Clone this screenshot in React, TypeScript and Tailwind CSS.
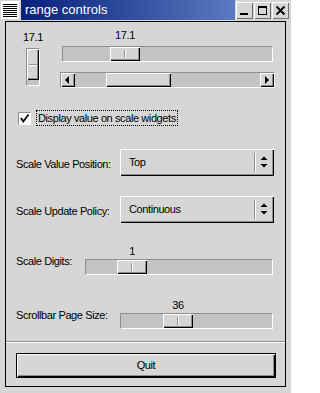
const raised =
  "bg-[#d6d6d6] shadow-[inset_1px_1px_0_#ffffff,inset_-1px_-1px_0_#000000,inset_-2px_-2px_0_#8e8e8e]";
const trough =
  "border border-t-[#8e8e8e] border-l-[#8e8e8e] border-r-white border-b-white bg-[#c3c3c3]";

function HThumb({ offset }: { offset: string }) {
  return (
    <div className={`flex h-full w-[30px] items-center justify-center ${raised} ${offset}`}>
      <div className="h-[8px] w-px bg-[#8e8e8e]" />
      <div className="h-[8px] w-px bg-white" />
    </div>
  );
}

function OptionMenu({ value }: { value: string }) {
  return (
    <div className={`flex h-[27px] w-[154px] items-center ${raised}`}>
      <span className="flex-1 pl-[9px]">{value}</span>
      <div className="flex h-[19px]">
        <div className="w-px bg-[#8e8e8e]" />
        <div className="w-px bg-white" />
      </div>
      <svg width="17" height="27" viewBox="0 0 17 27" className="mr-[1px]">
        <polygon points="4.5,11 11.5,11 8,7.5" fill="#000" />
        <polygon points="4.5,15 11.5,15 8,18.5" fill="#000" />
      </svg>
    </div>
  );
}

function TitleButton({ kind }: { kind: "min" | "max" | "close" }) {
  return (
    <div className="h-[17px] w-[17px] bg-[#d6d6d6] shadow-[inset_1px_1px_0_#ffffff,inset_-1px_-1px_0_#6e6e6e]">
      <svg width="17" height="17" viewBox="0 0 17 17">
        {kind === "min" && <rect x="4" y="11" width="8" height="2" fill="#000" />}
        {kind === "max" && (
          <>
            <rect x="4.5" y="4.5" width="8" height="8" fill="none" stroke="#000" />
            <rect x="4" y="4" width="9" height="2" fill="#000" />
          </>
        )}
        {kind === "close" && (
          <path d="M4.5 4.5 L12.5 12.5 M12.5 4.5 L4.5 12.5" stroke="#000" strokeWidth="1.8" />
        )}
      </svg>
    </div>
  );
}

export default function App() {
  return (
    <div className="flex h-[393px] w-[291px] flex-col bg-[#d6d6d6] font-['Liberation_Sans',Arial,sans-serif] text-[11px] tracking-[-0.4px] text-black">
      {/* title bar */}
      <div className="flex h-[20px]">
        <svg width="20" height="20" viewBox="0 0 20 20">
          <rect x="1" y="1" width="18" height="18" fill="#ffffff" />
          {[4, 6, 8, 10, 12, 14, 16].map((y) => (
            <rect key={y} x="3" y={y} width="14" height="1" fill="#000" />
          ))}
        </svg>
        <div className="ml-[1px] flex h-[20px] w-[214px] items-center bg-gradient-to-r from-[#0a1f78] to-[#5a7ac2] pl-[4px] text-[13px] tracking-[0px] text-white">
          range controls
        </div>
        <div className="ml-[1px] mt-[2px] flex gap-[1px]">
          <TitleButton kind="min" />
          <TitleButton kind="max" />
          <TitleButton kind="close" />
        </div>
      </div>

      {/* client area */}
      <div className="ml-[5px] mt-[1px] flex h-[366px] w-[281px] flex-col border border-black">
        {/* scales */}
        <div className="mt-[7px] flex">
          <div className="ml-[14px] flex w-[26px] flex-col items-center">
            <div className="mt-[2px] h-[13px] leading-[13px]">17.1</div>
            <div className={`mt-[4px] flex h-[38px] w-[14px] flex-col ${trough}`}>
              <div className={`flex h-[31px] w-full flex-col items-center justify-center ${raised}`}>
                <div className="h-px w-[8px] bg-[#8e8e8e]" />
                <div className="h-px w-[8px] bg-white" />
              </div>
            </div>
          </div>
          <div className="ml-[14px] flex w-[215px] flex-col">
            <div className="ml-[50px] h-[13px] w-[30px] text-center leading-[13px]">17.1</div>
            <div className={`mx-[2px] mt-[4px] flex h-[16px] ${trough}`}>
              <HThumb offset="ml-[47px]" />
            </div>
            <div className={`mt-[10px] flex h-[16px] ${trough}`}>
              <div className={`h-[14px] w-[14px] ${raised}`}>
                <svg width="14" height="14" viewBox="0 0 14 14">
                  <polygon points="4,7 8,3 8,11" fill="#000" />
                </svg>
              </div>
              <div className={`ml-[31px] h-[14px] w-[65px] ${raised}`} />
              <div className={`ml-auto h-[14px] w-[14px] ${raised}`}>
                <svg width="14" height="14" viewBox="0 0 14 14">
                  <polygon points="9,7 5,3 5,11" fill="#000" />
                </svg>
              </div>
            </div>
          </div>
        </div>

        {/* checkbox */}
        <div className="ml-[12px] mt-[22px] flex h-[16px] items-center">
          <div className="h-[13px] w-[13px] border border-t-[#8e8e8e] border-l-[#8e8e8e] border-r-white border-b-white bg-white">
            <svg width="11" height="11" viewBox="0 0 11 11">
              <path d="M2 5 L4.3 8.5 L9.5 1.5" fill="none" stroke="#000" strokeWidth="1.8" />
            </svg>
          </div>
          <div className="ml-[5px] h-[16px] border border-dotted border-black px-[1px] leading-[14px]">
            Display value on scale widgets
          </div>
        </div>

        {/* option menus */}
        <div className="ml-[10px] mt-[23px] flex items-center">
          <span className="mt-[4px] w-[104px]">Scale Value Position:</span>
          <OptionMenu value="Top" />
        </div>
        <div className="ml-[10px] mt-[20px] flex items-center">
          <span className="mt-[4px] w-[104px]">Scale Update Policy:</span>
          <OptionMenu value="Continuous" />
        </div>

        {/* digits */}
        <div className="ml-[10px] mt-[20px] flex items-end">
          <span className="mb-[7px] w-[69px] leading-[13px]">Scale Digits:</span>
          <div className="flex w-[188px] flex-col">
            <div className="ml-[32px] h-[16px] w-[30px] text-center leading-[16px]">1</div>
            <div className={`flex h-[16px] ${trough}`}>
              <HThumb offset="ml-[31px]" />
            </div>
          </div>
        </div>

        {/* page size */}
        <div className="ml-[10px] mt-[22px] flex items-end">
          <span className="mb-[7px] w-[104px] leading-[13px]">Scrollbar Page Size:</span>
          <div className="flex w-[153px] flex-col">
            <div className="ml-[43px] h-[16px] w-[30px] text-center leading-[16px]">36</div>
            <div className={`flex h-[16px] ${trough}`}>
              <HThumb offset="ml-[42px]" />
            </div>
          </div>
        </div>

        <div className="mt-[12px] h-px bg-[#8e8e8e]" />
        <div className="h-px bg-white" />

        <div className="ml-[10px] mt-[10px] h-[25px] w-[260px] border border-black">
          <div className={`flex h-full items-center justify-center ${raised}`}>Quit</div>
        </div>
      </div>
    </div>
  );
}
